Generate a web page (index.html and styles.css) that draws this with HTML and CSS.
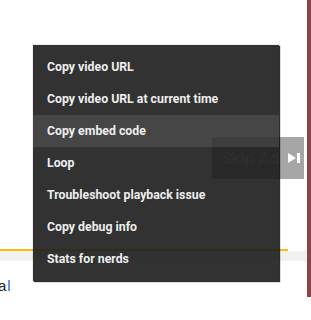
FILE: index.html
```html
<!DOCTYPE html>
<html lang="en">
<head>
    <meta charset="UTF-8">
    <meta name="viewport" content="width=device-width, initial-scale=1.0">
    <title>Player context menu</title>
    <link rel="stylesheet" href="styles.css">
</head>
<body>
    <div class="page">
        <div class="main">
            <div class="player">
                <div class="skip-ad">
                    <span class="skip-label">Skip Ad</span>
                    <svg class="skip-icon" width="12" height="10" viewBox="0 0 12 10">
                        <path d="M0 0 L8 5 L0 10 Z" fill="#fff"/>
                        <rect x="9" y="0" width="3" height="10" fill="#fff"/>
                    </svg>
                </div>
            </div>
            <div class="ad-progress">
                <div class="ad-progress-played" style="width: 288px"></div>
            </div>
            <div class="track"></div>
            <div class="below">
                <span class="title">a<span class="title-link">l</span></span>
            </div>
        </div>
        <div class="side-bar"></div>

        <ul class="context-menu">
            <li class="menu-item">Copy video URL</li>
            <li class="menu-item">Copy video URL at current time</li>
            <li class="menu-item active">Copy embed code</li>
            <li class="menu-item">Loop</li>
            <li class="menu-item">Troubleshoot playback issue</li>
            <li class="menu-item">Copy debug info</li>
            <li class="menu-item">Stats for nerds</li>
        </ul>
    </div>
</body>
</html>
```

FILE: styles.css
```css
body {
    margin: 0;
    background: #fff;
    font-family: Roboto, Arial, sans-serif;
}
.page {
    position: relative;
    display: flex;
    width: 311px;
    height: 320px;
    overflow: hidden;
}
.main {
    width: 307px;
}
.side-bar {
    width: 4px;
    height: 297px;
    background-color: #8c4545;
}
.player {
    position: relative;
    height: 249px;
}
.skip-ad {
    position: absolute;
    left: 212px;
    top: 137px;
    width: 92px;
    height: 42px;
    display: flex;
    align-items: center;
    padding-left: 10px;
    box-sizing: border-box;
    background: rgba(0, 0, 0, 0.35);
    color: rgba(255, 255, 255, 0.5);
}
.skip-label {
    font-size: 17px;
    width: 66px;
}
.skip-icon {
    display: block;
}
.ad-progress {
    height: 2px;
}
.ad-progress-played {
    height: 100%;
    background-color: #fbbc04;
}
.track {
    height: 10px;
    background-color: #f1f1f1;
}
.below {
    padding-top: 15px;
    font-family: 'Liberation Sans', Arial, sans-serif;
    font-size: 15px;
    line-height: 20px;
}
.title {
    display: inline-block;
    margin-left: -2px;
    color: #222;
}
.title-link {
    color: #1a66d2;
    margin-left: 1px;
}
.context-menu {
    position: absolute;
    left: 33px;
    top: 45px;
    width: 246px;
    margin: 0;
    padding: 6px 0;
    list-style: none;
    box-sizing: border-box;
    background: rgba(28, 28, 28, 0.9);
    box-shadow: 0 0 1px rgba(0, 0, 0, 0.4), 1px 1px 1px rgba(0, 0, 0, 0.8);
}
.menu-item {
    height: 32px;
    line-height: 32px;
    padding: 0 14px;
    font-size: 12.3px;
    font-weight: 700;
    color: #eee;
    white-space: nowrap;
}
.menu-item.active {
    background-color: rgba(255, 255, 255, 0.1);
}
```
